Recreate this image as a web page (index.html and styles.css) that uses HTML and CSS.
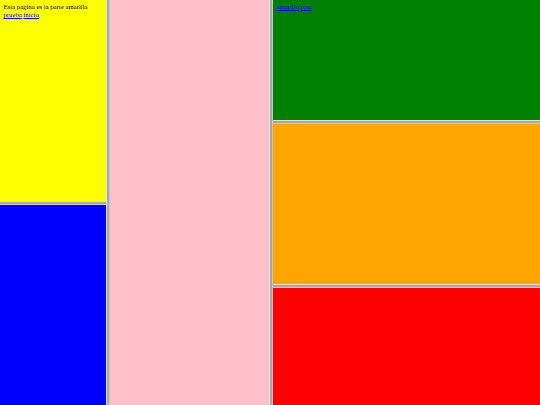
FILE: index.html
```html
<!DOCTYPE html>
<html>
<head>
<meta charset="utf-8">
<link rel="stylesheet" href="styles.css">
</head>
<body>
<div class="frameset">
  <div class="col col-left">
    <div class="frame yellow" style="height:201px">
      <div class="doc">Esta pagina es la parte amarilla<br><a href="#">prueba</a> <a href="#">inicio</a></div>
    </div>
    <div class="hborder"></div>
    <div class="frame blue fill"></div>
  </div>
  <div class="vborder"></div>
  <div class="col">
    <div class="frame pink fill"></div>
  </div>
  <div class="vborder"></div>
  <div class="col">
    <div class="frame green" style="height:120px">
      <div class="doc"><a href="#">amarillo</a> <a href="#">rosa</a></div>
    </div>
    <div class="hborder"></div>
    <div class="frame orange" style="height:160px"></div>
    <div class="hborder"></div>
    <div class="frame red fill"></div>
  </div>
</div>
</body>
</html>
```

FILE: styles.css
```css
html, body {
  margin: 0;
  padding: 0;
  width: 540px;
  height: 405px;
  overflow: hidden;
}
.frameset {
  display: grid;
  grid-template-columns: 106px 4px 159px 4px 1fr;
  width: 540px;
  height: 405px;
}
.col {
  display: flex;
  flex-direction: column;
  height: 405px;
  min-width: 0;
}
.frame {
  flex: none;
  overflow: hidden;
}
.fill {
  flex: 1 1 auto;
}
.doc {
  margin: 3.4px;
  font-family: "Liberation Serif", "Times New Roman", serif;
  font-size: 6.75px;
  line-height: 1.15;
  color: #000;
}
.doc a {
  color: #0000ee;
  text-decoration: underline;
}
.yellow { background: #ffff00; }
.blue { background: #0000ff; }
.pink { background: #ffc0cb; }
.green { background: #008000; }
.orange { background: #ffa500; }
.red { background: #ff0000; }
.vborder {
  background: linear-gradient(to right, #e0e0e0 0, #e0e0e0 1px, #a8a8a8 1px, #a8a8a8 3px, #c8c8c8 3px);
}
.hborder {
  flex: none;
  height: 4px;
  background: linear-gradient(to bottom, #e0e0e0 0, #e0e0e0 1px, #a8a8a8 1px, #a8a8a8 3px, #c8c8c8 3px);
}
```
